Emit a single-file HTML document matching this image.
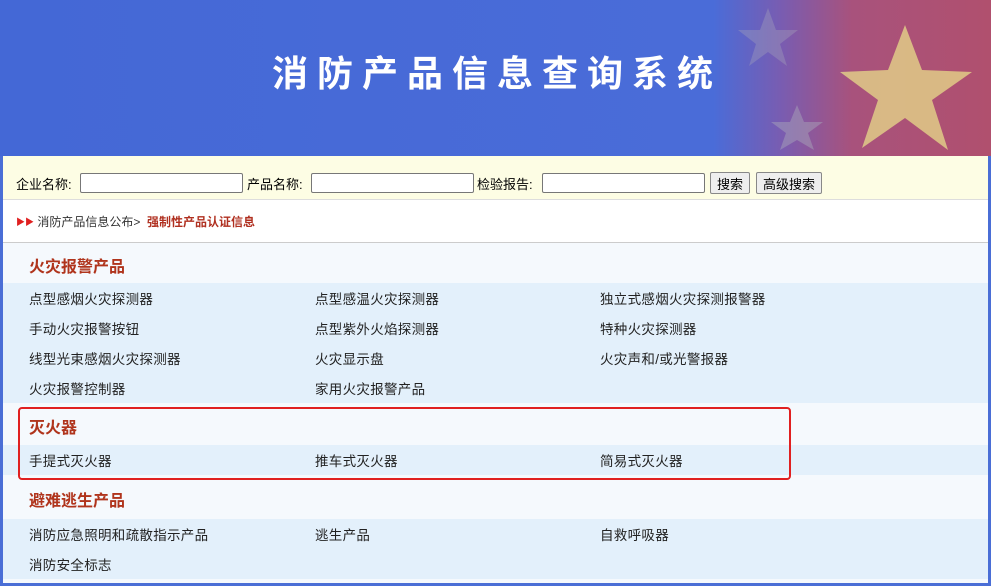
<!DOCTYPE html>
<html><head><meta charset="utf-8"><style>
*{margin:0;padding:0;box-sizing:border-box}
body{width:991px;height:586px;background:#4a6ed6;font-family:"Liberation Sans","Noto Sans CJK SC",sans-serif;font-size:13px;color:#333;overflow:hidden;position:relative}
.hdr{position:absolute;left:0;top:0;width:991px;height:156px;background:linear-gradient(90deg,#4468d6 0%,#4a6cd8 72%,#7a5cb0 79%,#a8527c 86%,#b0506e 100%)}
.title{position:absolute;left:272px;top:45px;color:#fff;font-size:36px;font-weight:bold;letter-spacing:9px;font-family:"Noto Sans CJK SC",sans-serif}
.main{position:absolute;left:3px;top:156px;width:985px;height:427px;background:#f5f9fd}
.search{height:44px;background:#fdfde4;border-bottom:1px solid #ddd;position:relative;font-size:13px;color:#000}
.search span,.search input,.search .btn{position:absolute;top:17px}
.search input{width:163px;height:20px;border:1px solid #777;border-radius:2px;background:#fff;top:17px}
.search .btn{border:1px solid #888;background:#eee;padding:1px 6px;font-size:13px;border-radius:2px;height:22px;top:16px}
.crumb{height:43px;background:#fff;border-bottom:1px solid #ccc;display:flex;align-items:center;padding-left:13px;font-size:12px}
.crumb b{color:#b03020}
.sec{padding-left:26px;display:flex;align-items:center;color:#b0341c;font-size:16px;font-weight:bold;padding-top:4px}
.row{height:30px;background:#e3f0fb;display:flex;align-items:center;font-size:13.5px;color:#222}
.row span{display:inline-block;width:285px;padding-left:26px;letter-spacing:0.3px}
.row span+span{padding-left:27px}
.box{position:absolute;left:18px;top:407px;width:773px;height:73px;border:2px solid #e02020;border-radius:4px}
</style></head><body>
<div class="hdr">
<svg width="991" height="156" style="position:absolute;left:0;top:0">
<polygon fill="#e8dc8a" opacity="0.75" points="905,25 922,70 972,72 932,100 948,150 905,118 862,148 878,100 840,72 888,70"/>
<polygon fill="#aab" opacity="0.35" points="768,8 776,30 798,30 780,44 787,66 768,52 749,66 756,44 738,30 760,30"/>
<polygon fill="#aab" opacity="0.45" points="797,105 804,122 823,122 808,133 814,150 797,140 780,150 786,133 771,122 790,122"/>
</svg>
<div class="title">消防产品信息查询系统</div>
</div>
<div class="main">
<div class="search">
<span style="left:13px;top:18px">企业名称:</span><input style="left:77px">
<span style="left:244px;top:18px">产品名称:</span><input style="left:308px">
<span style="left:474px;top:18px">检验报告:</span><input style="left:539px">
<span class="btn" style="left:707px">搜索</span><span class="btn" style="left:753px">高级搜索</span>
</div>
<div class="crumb"><span style="color:#e02020;font-size:9px">▶▶</span>&nbsp;消防产品信息公布&gt;&nbsp;&nbsp;<b>强制性产品认证信息</b></div>
<div class="sec" style="height:40px">火灾报警产品</div>
<div class="row"><span>点型感烟火灾探测器</span><span>点型感温火灾探测器</span><span>独立式感烟火灾探测报警器</span></div>
<div class="row"><span>手动火灾报警按钮</span><span>点型紫外火焰探测器</span><span>特种火灾探测器</span></div>
<div class="row"><span>线型光束感烟火灾探测器</span><span>火灾显示盘</span><span>火灾声和/或光警报器</span></div>
<div class="row"><span>火灾报警控制器</span><span>家用火灾报警产品</span></div>
<div class="sec" style="height:42px">灭火器</div>
<div class="row"><span>手提式灭火器</span><span>推车式灭火器</span><span>简易式灭火器</span></div>
<div class="sec" style="height:44px">避难逃生产品</div>
<div class="row"><span>消防应急照明和疏散指示产品</span><span>逃生产品</span><span>自救呼吸器</span></div>
<div class="row"><span>消防安全标志</span></div>
</div>
<div class="box"></div>
</body></html>
